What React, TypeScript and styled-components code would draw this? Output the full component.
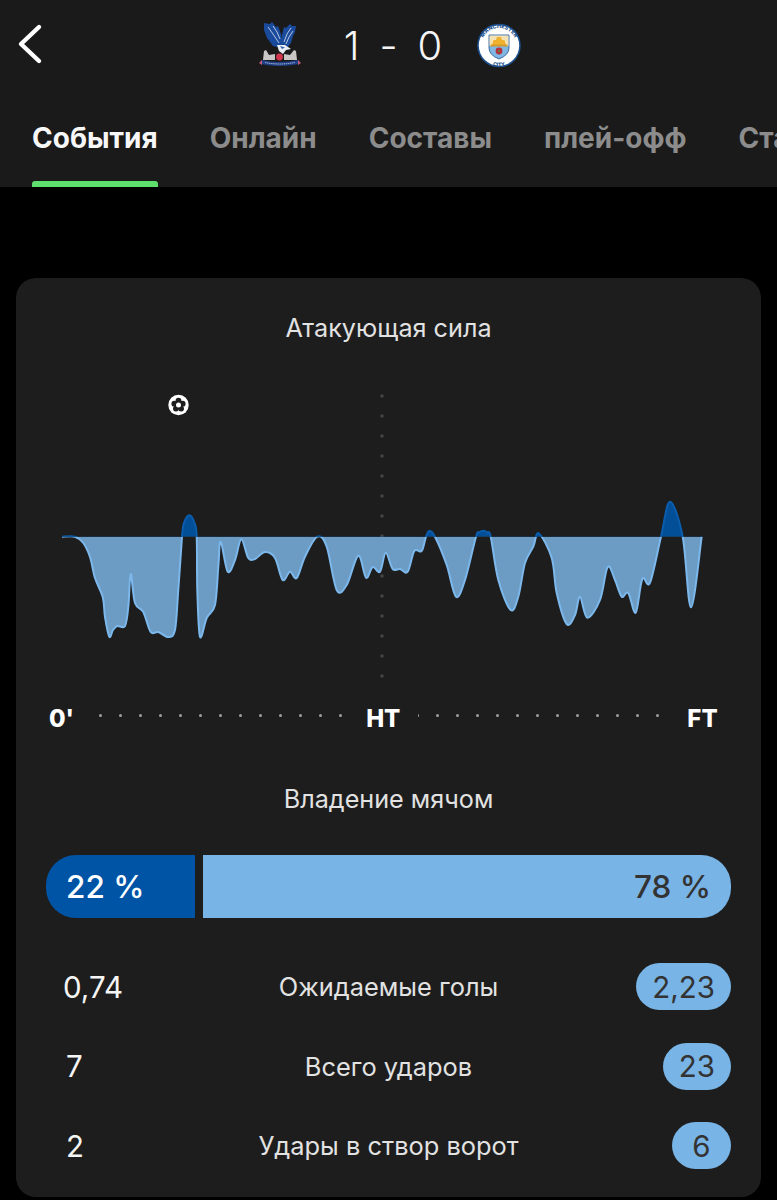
import React from 'react';
import styled, { createGlobalStyle } from 'styled-components';

const GlobalStyle = createGlobalStyle`
  html, body {
    margin: 0;
    padding: 0;
    background: #000000;
    font-family: Inter, "Liberation Sans", sans-serif;
  }
`;

const Page = styled.div`
  width: 777px;
  height: 1200px;
  overflow: hidden;
  background: #000000;
  color: #ffffff;
`;

const Header = styled.header`
  background: #1a1a1a;
  height: 187px;
  overflow: hidden;
`;

const ScoreBar = styled.div`
  position: relative;
  height: 90px;
  display: flex;
  justify-content: center;
`;

const BackButton = styled.svg`
  position: absolute;
  left: 14px;
  top: 20px;
`;

const ScoreRow = styled.div`
  display: flex;
  align-items: flex-start;
  padding-top: 18px;
  margin-left: 4px;
`;

const Score = styled.div`
  width: 167px;
  height: 54px;
  box-sizing: border-box;
  padding-left: 9px;
  display: flex;
  justify-content: center;
  gap: 20px;
  align-items: center;
  font-size: 40px;
  font-weight: 300;
  color: #f5f5f5;
`;

const Tabs = styled.nav`
  display: flex;
  gap: 52px;
  padding-left: 32px;
  white-space: nowrap;
`;

const Tab = styled.div<{ $active?: boolean }>`
  position: relative;
  height: 97px;
  padding-top: 31px;
  box-sizing: border-box;
  font-size: 28px;
  line-height: 34px;
  font-weight: 700;
  color: ${(p) => (p.$active ? '#f7f7f7' : '#8c8c8c')};

  ${(p) =>
    p.$active &&
    `&::after {
      content: '';
      position: absolute;
      left: 0;
      right: 0;
      bottom: 0;
      height: 6px;
      border-radius: 3px 3px 0 0;
      background: #5fdf6e;
    }`}
`;

const Card = styled.section`
  margin: 91px 16px 0;
  height: 919px;
  box-sizing: border-box;
  background: #1d1d1d;
  border-radius: 20px;
  padding-top: 35px;
`;

const Title = styled.h2`
  margin: 0;
  height: 30px;
  text-align: center;
  font-size: 25.2px;
  line-height: 30px;
  font-weight: 400;
  color: #e2e2e2;
`;

const Chart = styled.svg`
  display: block;
  margin-top: 37px;
`;

const Timeline = styled.div`
  display: flex;
  align-items: center;
  height: 32px;
  margin: 25px 0 0;
  padding-left: 33px;
`;

const TimeLabel = styled.span<{ $left?: number }>`
  margin-left: ${(p) => p.$left ?? 0}px;
  font-size: 24px;
  line-height: 32px;
  font-weight: 800;
  color: #ffffff;
`;

const DotRun = styled.div<{ $left: number }>`
  display: flex;
  align-items: center;
  gap: 17px;
  margin-left: ${(p) => p.$left}px;
  margin-top: -7px;
`;

const Dot = styled.span<{ $small?: boolean }>`
  width: ${(p) => (p.$small ? 1 : 3)}px;
  height: 3px;
  border-radius: 50%;
  background: #a0a0a0;
`;

const SecondTitle = styled(Title)`
  margin-top: 49px;
`;

const Possession = styled.div`
  display: flex;
  gap: 8px;
  height: 63px;
  margin: 41px 30px 0;
`;

const Share = styled.div<{ $home?: boolean }>`
  display: flex;
  align-items: center;
  justify-content: ${(p) => (p.$home ? 'flex-start' : 'flex-end')};
  width: ${(p) => (p.$home ? '149px' : 'auto')};
  flex: ${(p) => (p.$home ? 'none' : '1')};
  padding: ${(p) => (p.$home ? '0 0 0 20px' : '0 20px 0 0')};
  box-sizing: border-box;
  background: ${(p) => (p.$home ? '#0054a6' : '#78b4e6')};
  color: ${(p) => (p.$home ? '#ffffff' : '#333333')};
  border-radius: ${(p) => (p.$home ? '30px 0 0 30px' : '0 30px 30px 0')};
  font-size: 31.5px;
  font-weight: 500;
`;

const StatList = styled.div`
  display: flex;
  flex-direction: column;
  gap: 32.5px;
  margin: 45px 30px 0;
`;

const StatRow = styled.div`
  display: grid;
  grid-template-columns: 1fr auto 1fr;
  align-items: center;
  height: 47px;
`;

const HomeValue = styled.span<{ $inset: number }>`
  padding-left: ${(p) => p.$inset}px;
  font-size: 29.5px;
  font-weight: 400;
  color: #f5f5f5;
`;

const StatLabel = styled.span`
  font-size: 25.4px;
  font-weight: 400;
  color: #e2e2e2;
`;

const AwayPill = styled.span`
  justify-self: end;
  min-width: 59px;
  height: 47px;
  box-sizing: border-box;
  padding: 0 16px;
  display: flex;
  align-items: center;
  justify-content: center;
  border-radius: 24px;
  background: #78b4e6;
  color: #333333;
  font-size: 29.5px;
`;

type Pt = [number, number];

// traced from the curve, page coordinates
const curve: Pt[] = [
  [62, 536.7], [75, 536.7], [83.3, 543], [90, 557], [95, 578], [102.7, 597], [105, 617], [109.3, 636.7],
  [113, 630], [117.3, 626], [125, 626], [128.3, 607], [130.7, 574], [135, 603], [143.3, 612], [150.7, 632],
  [158.3, 632], [168.3, 637], [175, 630], [178.3, 590], [182, 536.7], [184, 523], [189.3, 515.3], [194.5, 523],
  [196.7, 536.7], [197.3, 590], [200, 636.7], [206.7, 618], [215, 605], [218.3, 567], [220.7, 541.7],
  [227.7, 571.7], [235, 560], [241.3, 539.3], [248.3, 558], [255, 559], [265, 552], [275, 558], [282.7, 580],
  [290, 571.7], [296.7, 578], [305, 556.7], [317.3, 536.7], [326.7, 546.7], [336.7, 590], [346.7, 585],
  [358.3, 555.7], [366, 577.7], [372.7, 567], [380, 571.7], [385.7, 552.7], [392.7, 569], [400, 569],
  [407.7, 571.7], [414.3, 551], [421.7, 551], [426, 536.7], [429.3, 531], [435, 536.7], [446.7, 565],
  [456, 596.7], [465, 580], [476, 536.7], [479.5, 532.3], [483.3, 530.8], [487, 532.3], [490.7, 536.7],
  [498.3, 580], [510.7, 610], [518.3, 596.7], [525, 563], [533.3, 546.7], [538.7, 533.3], [551.7, 558],
  [556.7, 593], [566.7, 624], [575, 615], [580, 596.7], [587.3, 617.7], [600, 600], [607.7, 567], [615, 580],
  [621.7, 596.7], [628.3, 593], [635.7, 612.7], [642.3, 579], [650, 582.7], [661, 536.7], [670, 501.7],
  [682.7, 536.7], [691, 607.3], [701.7, 536.7],
];

const smoothPath = (pts: Pt[]) => {
  let d = `M${pts[0][0]} ${pts[0][1]}`;
  for (let i = 0; i < pts.length - 1; i++) {
    const p0 = pts[Math.max(i - 1, 0)];
    const p1 = pts[i];
    const p2 = pts[i + 1];
    const p3 = pts[Math.min(i + 2, pts.length - 1)];
    const c1x = p1[0] + (p2[0] - p0[0]) / 6;
    const c1y = p1[1] + (p2[1] - p0[1]) / 6;
    const c2x = p2[0] - (p3[0] - p1[0]) / 6;
    const c2y = p2[1] - (p3[1] - p1[1]) / 6;
    d += ` C${c1x.toFixed(1)} ${c1y.toFixed(1)} ${c2x.toFixed(1)} ${c2y.toFixed(1)} ${p2[0]} ${p2[1]}`;
  }
  return d;
};

const linePath = smoothPath(curve);
const BASE = 536.7;
const areaPath = `${linePath} L62 ${BASE} Z`;
const midDots = Array.from({ length: 15 }, (_, i) => 396 + i * 20);
const ballLobes = [0, 72, 144, 216, 288].map((deg) => {
  const a = ((deg - 90) * Math.PI) / 180;
  return [178.5 + 4.4 * Math.cos(a), 405 + 4.4 * Math.sin(a)];
});

const PalaceCrest = () => (
  <svg width="50" height="54" viewBox="0 0 50 54">
    <path d="M9 5 L15 6 L17 4 L21 9 L23 8 L26 16 L28 25 L26 30 L18 28 L12 20 L9 12 Z" fill="#1a4a9c" />
    <path d="M13 9 L18 16 L24 25 M18 8 L22 14 L25 21" stroke="#dfe6f3" strokeWidth="0.8" fill="none" />
    <path d="M41 8 L37 8 L35 6 L31 10 L29 9 L27 17 L27 26 L32 30 L36 25 L38 18 L40 14 Z" fill="#1a4a9c" />
    <path d="M36 10 L32 16 L29 24 M38 13 L34 19 L31 26" stroke="#dfe6f3" strokeWidth="0.8" fill="none" />
    <path d="M22 27 L30 27 L36 31 L31 32 L28 36 L24 33 Z" fill="#e9edf6" />
    <path d="M25 28 L30 29.5 L27 31 Z" fill="#2a5cab" />
    <path d="M9 33 L11 32 L14 37 L20 36 L20 42 L8 42 Z" fill="#c9c6c6" />
    <path d="M41 33 L39 32 L35 37 L29 36 L29 42 L42 42 Z" fill="#c9c6c6" />
    <circle cx="24.5" cy="39" r="3.4" fill="#d4344e" />
    <path d="M7 42 Q24 46 43 42 L44 46 Q24 50 6 46 Z" fill="#1f3f86" />
    <path d="M7 42 L4 45 L7 47 Z M43 42 L46 45 L43 47 Z" fill="#c65a78" />
    <path d="M10 44.5 Q24 47.5 40 44.5" stroke="#c8cfe0" strokeWidth="0.9" strokeDasharray="1.4 0.7" fill="none" />
  </svg>
);

const CityCrest = () => (
  <svg width="54" height="54" viewBox="0 0 54 54">
    <defs>
      <path id="cityTop" d="M9.5 27.5 A17.5 17.5 0 0 1 44.5 27.5" />
      <path id="cityBottom" d="M7.5 29 A19.5 19.5 0 0 0 46.5 29" />
    </defs>
    <circle cx="27" cy="27.5" r="21.8" fill="#1c4f8c" />
    <circle cx="27" cy="27.5" r="20.2" fill="#ffffff" />
    <text fontFamily="Inter, sans-serif" fontSize="5.4" fontWeight="800" fill="#1c4f8c" textAnchor="middle">
      <textPath href="#cityTop" startOffset="50%">MANCHESTER</textPath>
    </text>
    <text fontFamily="Inter, sans-serif" fontSize="5.2" fontWeight="800" fill="#1c4f8c" textAnchor="middle">
      <textPath href="#cityBottom" startOffset="50%">CITY</textPath>
    </text>
    <path d="M17 17 H37 V30 Q37 37 27 41 Q17 37 17 30 Z" fill="#7fb6e2" stroke="#1c4f8c" strokeWidth="0.8" />
    <path d="M17.5 17.5 H36.5 V28 H17.5 Z" fill="#f4e2b4" />
    <path d="M20 27 L21.5 22 H24 L25 19 H29 L30 22 H32.5 L34 27 Z" fill="#eeb22f" />
    <rect x="18.5" y="26.5" width="17" height="2" fill="#d79a2a" />
    <circle cx="27" cy="33" r="3.4" fill="#b4303a" />
    <circle cx="27" cy="33" r="1.1" fill="#5a8a3a" />
  </svg>
);

const stats = [
  { home: '0,74', inset: 17, label: 'Ожидаемые голы', away: '2,23' },
  { home: '7', inset: 20, label: 'Всего ударов', away: '23' },
  { home: '2', inset: 20, label: 'Удары в створ ворот', away: '6' },
];

const App: React.FC = () => (
  <Page>
    <GlobalStyle />
    <Header>
      <ScoreBar>
        <BackButton width="32" height="48" viewBox="0 0 32 48">
          <path d="M25 7 L7 24 L25 41" fill="none" stroke="#ffffff" strokeWidth="4.4" strokeLinecap="round" strokeLinejoin="round" />
        </BackButton>
        <ScoreRow>
          <PalaceCrest />
          <Score>
            <span>1</span>
            <span>-</span>
            <span>0</span>
          </Score>
          <CityCrest />
        </ScoreRow>
      </ScoreBar>
      <Tabs>
        <Tab $active>События</Tab>
        <Tab>Онлайн</Tab>
        <Tab>Составы</Tab>
        <Tab>плей-офф</Tab>
        <Tab>Статистика</Tab>
      </Tabs>
    </Header>
    <Card>
      <Title>Атакующая сила</Title>
      <Chart width="745" height="298" viewBox="16 380 745 298">
        <defs>
          <clipPath id="above">
            <rect x="16" y="380" width="745" height={BASE - 380} />
          </clipPath>
          <clipPath id="below">
            <rect x="16" y={BASE} width="745" height="160" />
          </clipPath>
        </defs>
        {midDots.map((y) => (
          <circle key={y} cx="382" cy={y} r="1.8" fill="#444444" />
        ))}
        <path d={areaPath} fill="#6c9cc4" clipPath="url(#below)" />
        <path d={linePath} fill="none" stroke="#7cb8ec" strokeWidth="2" clipPath="url(#below)" />
        <path d={areaPath} fill="#024f97" clipPath="url(#above)" />
        <path d={linePath} fill="none" stroke="#0a5cad" strokeWidth="2" clipPath="url(#above)" />
        <circle cx="178.5" cy="405" r="10.2" fill="#ffffff" />
        <circle cx="178.5" cy="405" r="4.4" fill="#1d1d1d" />
        {ballLobes.map(([cx, cy]) => (
          <circle key={cx} cx={cx} cy={cy} r="2.9" fill="#1d1d1d" />
        ))}
        <circle cx="178.5" cy="405" r="2.5" fill="#ffffff" />
      </Chart>
      <Timeline>
        <TimeLabel>0'</TimeLabel>
        <DotRun $left={25}>
          {Array.from({ length: 13 }, (_, i) => (
            <Dot key={i} />
          ))}
        </DotRun>
        <TimeLabel $left={24}>HT</TimeLabel>
        <DotRun $left={18}>
          <Dot $small />
          {Array.from({ length: 12 }, (_, i) => (
            <Dot key={i} />
          ))}
        </DotRun>
        <TimeLabel $left={28}>FT</TimeLabel>
      </Timeline>
      <SecondTitle>Владение мячом</SecondTitle>
      <Possession>
        <Share $home>22 %</Share>
        <Share>78 %</Share>
      </Possession>
      <StatList>
        {stats.map((s) => (
          <StatRow key={s.label}>
            <HomeValue $inset={s.inset}>{s.home}</HomeValue>
            <StatLabel>{s.label}</StatLabel>
            <AwayPill>{s.away}</AwayPill>
          </StatRow>
        ))}
      </StatList>
    </Card>
  </Page>
);

export default App;
